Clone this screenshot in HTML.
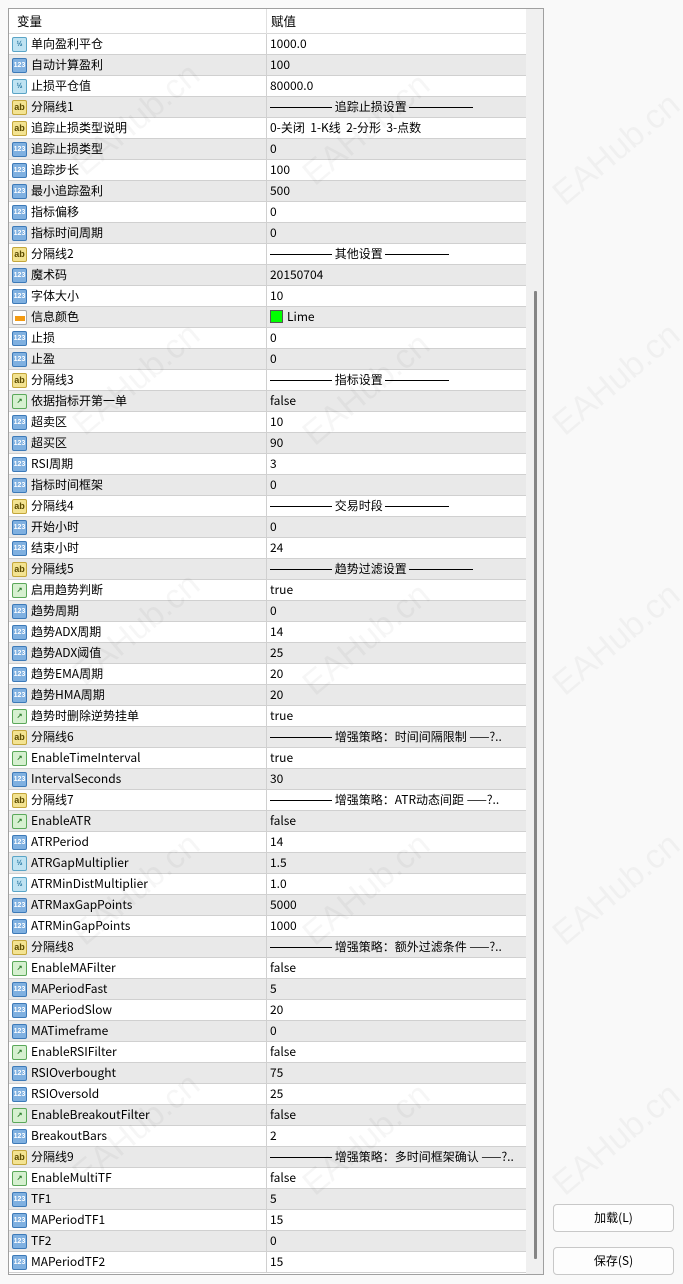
<!DOCTYPE html>
<html><head><meta charset="utf-8"><style>
*{margin:0;padding:0;box-sizing:border-box}
body{width:683px;height:1284px;background:#f9f9f9;font-family:"Noto Sans CJK SC","Liberation Sans",sans-serif;font-size:12px;color:#000;position:relative;overflow:hidden}
#panel{position:absolute;left:8px;top:8px;width:536px;height:1267px;border:1px solid #a0a0a0;background:#fff}
#hdr{position:absolute;left:0;top:0;width:517px;height:25px;border-bottom:1px solid #d8d8d8;background:#fff}
#hdr span{position:absolute;top:0;line-height:24px;font-size:12.5px}
#rows{position:absolute;left:0;top:25px;width:517px}
.r{height:21px;border-bottom:1px solid #d0d0d0;position:relative;background:#fff}
.r:nth-child(even){background:#e9e9e9}
.r .n{position:absolute;left:22px;top:0;line-height:20px;white-space:nowrap}
.r .v{position:absolute;left:261px;top:0;line-height:20px;white-space:nowrap}
.r .c{position:absolute;left:257px;top:0;width:1px;height:21px;background:#d0d0d0}
.ic{position:absolute;left:3px;top:3px;width:15px;height:15px;border-radius:2px;font-size:7px;font-weight:bold;line-height:13px;text-align:center;font-family:"Liberation Sans",sans-serif}
.d{background:#bfe3f2;border:1px solid #5aa4c6;color:#1a6d99}
.i{background:#7fb0e0;border:1px solid #3d7ab8;color:#fff}
.s{background:#f3e391;border:1px solid #c3a63b;color:#5a4a00;font-size:9px}
.b{background:#d6f0d0;border:1px solid #5ba85a;color:#2a7a2a}
.co{background:#fff;border:1px solid #aaa}
.co::after{content:"";position:absolute;left:2px;top:5px;width:10px;height:5px;background:#f39a12}
.sep{display:inline-block;width:62px;border-top:1px solid #000;vertical-align:middle}
.sep2{display:inline-block;width:64px;border-top:1px solid #000;vertical-align:middle}
#sb{position:absolute;left:517px;top:0;width:17px;height:1265px;background:#f0f0f0}
#thumb{position:absolute;left:8px;top:282px;width:3px;height:968px;background:#858585;border-radius:1px}
.btn{position:absolute;left:553px;width:121px;height:28px;border:1px solid #c8c8c8;border-radius:4px;background:#fdfdfd;text-align:center;line-height:26px;font-size:12px}
.wm{position:absolute;color:rgba(0,0,0,0.035);font-size:34px;transform:rotate(-40deg);font-family:"Liberation Sans",sans-serif;white-space:nowrap}
</style></head><body>
<div id="panel">
<div id="hdr"><span style="left:8px">变量</span><span style="left:262px">赋值</span><div style="position:absolute;left:257px;top:0;width:1px;height:25px;background:#e0e0e0"></div></div>
<div id="rows">
<div class="r"><div class="ic d">½</div><span class="n">单向盈利平仓</span><div class="c"></div><span class="v">1000.0</span></div>
<div class="r"><div class="ic i">123</div><span class="n">自动计算盈利</span><div class="c"></div><span class="v">100</span></div>
<div class="r"><div class="ic d">½</div><span class="n">止损平仓值</span><div class="c"></div><span class="v">80000.0</span></div>
<div class="r"><div class="ic s">ab</div><span class="n">分隔线1</span><div class="c"></div><span class="v"><span class="sep"></span> 追踪止损设置 <span class="sep2"></span></span></div>
<div class="r"><div class="ic s">ab</div><span class="n">追踪止损类型说明</span><div class="c"></div><span class="v">0-关闭&nbsp; 1-K线&nbsp; 2-分形&nbsp; 3-点数</span></div>
<div class="r"><div class="ic i">123</div><span class="n">追踪止损类型</span><div class="c"></div><span class="v">0</span></div>
<div class="r"><div class="ic i">123</div><span class="n">追踪步长</span><div class="c"></div><span class="v">100</span></div>
<div class="r"><div class="ic i">123</div><span class="n">最小追踪盈利</span><div class="c"></div><span class="v">500</span></div>
<div class="r"><div class="ic i">123</div><span class="n">指标偏移</span><div class="c"></div><span class="v">0</span></div>
<div class="r"><div class="ic i">123</div><span class="n">指标时间周期</span><div class="c"></div><span class="v">0</span></div>
<div class="r"><div class="ic s">ab</div><span class="n">分隔线2</span><div class="c"></div><span class="v"><span class="sep"></span> 其他设置 <span class="sep2"></span></span></div>
<div class="r"><div class="ic i">123</div><span class="n">魔术码</span><div class="c"></div><span class="v">20150704</span></div>
<div class="r"><div class="ic i">123</div><span class="n">字体大小</span><div class="c"></div><span class="v">10</span></div>
<div class="r"><div class="ic co"></div><span class="n">信息颜色</span><div class="c"></div><span class="v"><span style="display:inline-block;width:13px;height:13px;background:#00ff00;border:1px solid #555;vertical-align:-2px;margin-right:4px"></span>Lime</span></div>
<div class="r"><div class="ic i">123</div><span class="n">止损</span><div class="c"></div><span class="v">0</span></div>
<div class="r"><div class="ic i">123</div><span class="n">止盈</span><div class="c"></div><span class="v">0</span></div>
<div class="r"><div class="ic s">ab</div><span class="n">分隔线3</span><div class="c"></div><span class="v"><span class="sep"></span> 指标设置 <span class="sep2"></span></span></div>
<div class="r"><div class="ic b">↗</div><span class="n">依据指标开第一单</span><div class="c"></div><span class="v">false</span></div>
<div class="r"><div class="ic i">123</div><span class="n">超卖区</span><div class="c"></div><span class="v">10</span></div>
<div class="r"><div class="ic i">123</div><span class="n">超买区</span><div class="c"></div><span class="v">90</span></div>
<div class="r"><div class="ic i">123</div><span class="n">RSI周期</span><div class="c"></div><span class="v">3</span></div>
<div class="r"><div class="ic i">123</div><span class="n">指标时间框架</span><div class="c"></div><span class="v">0</span></div>
<div class="r"><div class="ic s">ab</div><span class="n">分隔线4</span><div class="c"></div><span class="v"><span class="sep"></span> 交易时段 <span class="sep2"></span></span></div>
<div class="r"><div class="ic i">123</div><span class="n">开始小时</span><div class="c"></div><span class="v">0</span></div>
<div class="r"><div class="ic i">123</div><span class="n">结束小时</span><div class="c"></div><span class="v">24</span></div>
<div class="r"><div class="ic s">ab</div><span class="n">分隔线5</span><div class="c"></div><span class="v"><span class="sep"></span> 趋势过滤设置 <span class="sep2"></span></span></div>
<div class="r"><div class="ic b">↗</div><span class="n">启用趋势判断</span><div class="c"></div><span class="v">true</span></div>
<div class="r"><div class="ic i">123</div><span class="n">趋势周期</span><div class="c"></div><span class="v">0</span></div>
<div class="r"><div class="ic i">123</div><span class="n">趋势ADX周期</span><div class="c"></div><span class="v">14</span></div>
<div class="r"><div class="ic i">123</div><span class="n">趋势ADX阈值</span><div class="c"></div><span class="v">25</span></div>
<div class="r"><div class="ic i">123</div><span class="n">趋势EMA周期</span><div class="c"></div><span class="v">20</span></div>
<div class="r"><div class="ic i">123</div><span class="n">趋势HMA周期</span><div class="c"></div><span class="v">20</span></div>
<div class="r"><div class="ic b">↗</div><span class="n">趋势时删除逆势挂单</span><div class="c"></div><span class="v">true</span></div>
<div class="r"><div class="ic s">ab</div><span class="n">分隔线6</span><div class="c"></div><span class="v"><span class="sep"></span> 增强策略：时间间隔限制 ——?..</span></div>
<div class="r"><div class="ic b">↗</div><span class="n">EnableTimeInterval</span><div class="c"></div><span class="v">true</span></div>
<div class="r"><div class="ic i">123</div><span class="n">IntervalSeconds</span><div class="c"></div><span class="v">30</span></div>
<div class="r"><div class="ic s">ab</div><span class="n">分隔线7</span><div class="c"></div><span class="v"><span class="sep"></span> 增强策略：ATR动态间距 ——?..</span></div>
<div class="r"><div class="ic b">↗</div><span class="n">EnableATR</span><div class="c"></div><span class="v">false</span></div>
<div class="r"><div class="ic i">123</div><span class="n">ATRPeriod</span><div class="c"></div><span class="v">14</span></div>
<div class="r"><div class="ic d">½</div><span class="n">ATRGapMultiplier</span><div class="c"></div><span class="v">1.5</span></div>
<div class="r"><div class="ic d">½</div><span class="n">ATRMinDistMultiplier</span><div class="c"></div><span class="v">1.0</span></div>
<div class="r"><div class="ic i">123</div><span class="n">ATRMaxGapPoints</span><div class="c"></div><span class="v">5000</span></div>
<div class="r"><div class="ic i">123</div><span class="n">ATRMinGapPoints</span><div class="c"></div><span class="v">1000</span></div>
<div class="r"><div class="ic s">ab</div><span class="n">分隔线8</span><div class="c"></div><span class="v"><span class="sep"></span> 增强策略：额外过滤条件 ——?..</span></div>
<div class="r"><div class="ic b">↗</div><span class="n">EnableMAFilter</span><div class="c"></div><span class="v">false</span></div>
<div class="r"><div class="ic i">123</div><span class="n">MAPeriodFast</span><div class="c"></div><span class="v">5</span></div>
<div class="r"><div class="ic i">123</div><span class="n">MAPeriodSlow</span><div class="c"></div><span class="v">20</span></div>
<div class="r"><div class="ic i">123</div><span class="n">MATimeframe</span><div class="c"></div><span class="v">0</span></div>
<div class="r"><div class="ic b">↗</div><span class="n">EnableRSIFilter</span><div class="c"></div><span class="v">false</span></div>
<div class="r"><div class="ic i">123</div><span class="n">RSIOverbought</span><div class="c"></div><span class="v">75</span></div>
<div class="r"><div class="ic i">123</div><span class="n">RSIOversold</span><div class="c"></div><span class="v">25</span></div>
<div class="r"><div class="ic b">↗</div><span class="n">EnableBreakoutFilter</span><div class="c"></div><span class="v">false</span></div>
<div class="r"><div class="ic i">123</div><span class="n">BreakoutBars</span><div class="c"></div><span class="v">2</span></div>
<div class="r"><div class="ic s">ab</div><span class="n">分隔线9</span><div class="c"></div><span class="v"><span class="sep"></span> 增强策略：多时间框架确认 ——?..</span></div>
<div class="r"><div class="ic b">↗</div><span class="n">EnableMultiTF</span><div class="c"></div><span class="v">false</span></div>
<div class="r"><div class="ic i">123</div><span class="n">TF1</span><div class="c"></div><span class="v">5</span></div>
<div class="r"><div class="ic i">123</div><span class="n">MAPeriodTF1</span><div class="c"></div><span class="v">15</span></div>
<div class="r"><div class="ic i">123</div><span class="n">TF2</span><div class="c"></div><span class="v">0</span></div>
<div class="r"><div class="ic i">123</div><span class="n">MAPeriodTF2</span><div class="c"></div><span class="v">15</span></div>
</div>
<div id="sb"><div id="thumb"></div></div>
</div>
<div class="btn" style="top:1204px">加载(L)</div>
<div class="btn" style="top:1247px">保存(S)</div>
<div class="wm" style="left:60px;top:100px">EAHub.cn</div>
<div class="wm" style="left:290px;top:110px">EAHub.cn</div>
<div class="wm" style="left:540px;top:130px">EAHub.cn</div>
<div class="wm" style="left:60px;top:360px">EAHub.cn</div>
<div class="wm" style="left:290px;top:370px">EAHub.cn</div>
<div class="wm" style="left:540px;top:360px">EAHub.cn</div>
<div class="wm" style="left:60px;top:610px">EAHub.cn</div>
<div class="wm" style="left:290px;top:620px">EAHub.cn</div>
<div class="wm" style="left:540px;top:620px">EAHub.cn</div>
<div class="wm" style="left:60px;top:870px">EAHub.cn</div>
<div class="wm" style="left:290px;top:870px">EAHub.cn</div>
<div class="wm" style="left:540px;top:870px">EAHub.cn</div>
<div class="wm" style="left:60px;top:1110px">EAHub.cn</div>
<div class="wm" style="left:290px;top:1120px">EAHub.cn</div>
<div class="wm" style="left:540px;top:1120px">EAHub.cn</div>
</body></html>
